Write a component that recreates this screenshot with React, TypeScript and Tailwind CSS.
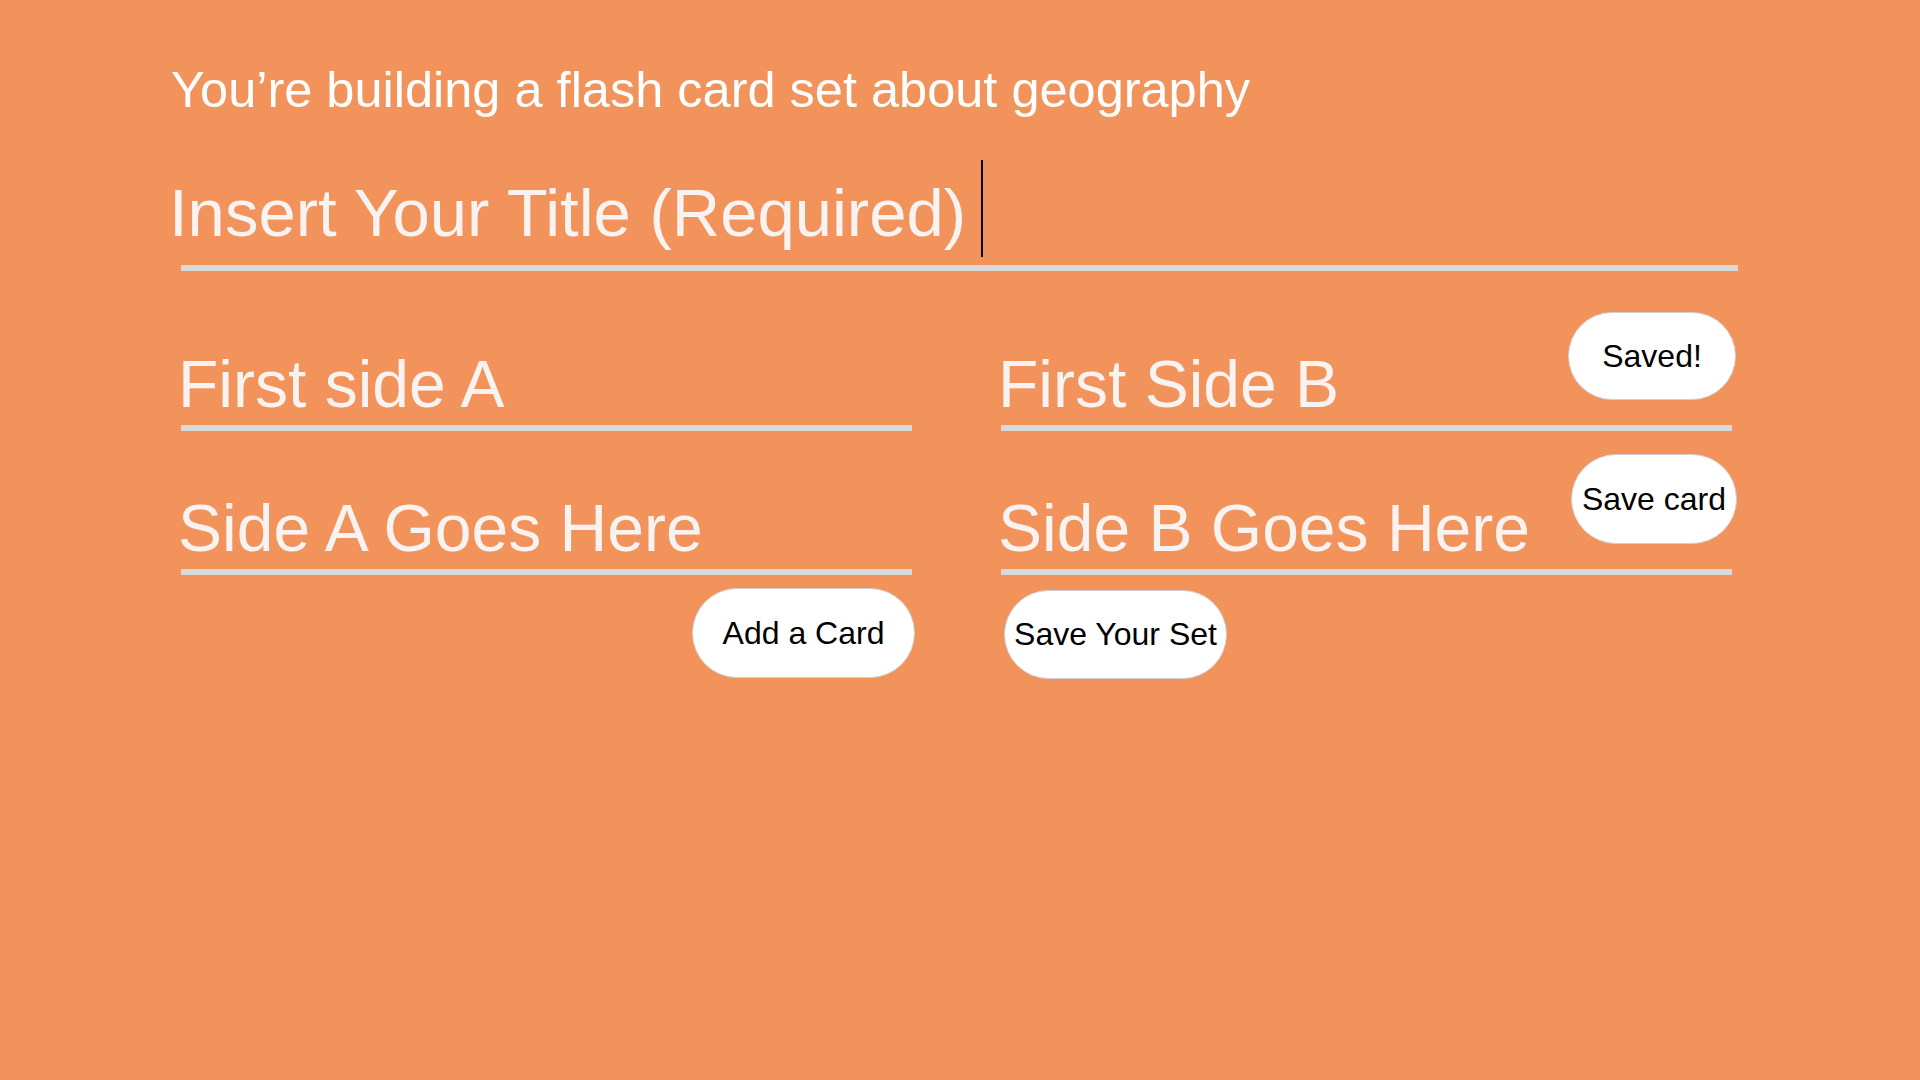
import React from "react";

function PillButton({ label, className = "" }: { label: string; className?: string }) {
  return (
    <button
      type="button"
      className={`flex items-center justify-center rounded-full bg-white border border-[#d0d0d0] text-black text-[32px] leading-none ${className}`}
    >
      {label}
    </button>
  );
}

function Field({ text, button }: { text: string; button?: React.ReactNode }) {
  return (
    <div className="flex flex-col w-[731px]">
      <div className="flex items-end justify-between">
        <div className="text-[66px] leading-none text-[#f8f2f0] -ml-[3px]">{text}</div>
        {button}
      </div>
      <div className="mt-[8px] h-[6px] bg-[#d9d9d9]" />
    </div>
  );
}

export default function App() {
  return (
    <div className="min-h-screen w-full bg-[#f2935c] font-['Liberation_Sans',Arial,sans-serif] pl-[172px] pt-[65px]">
      {/* heading */}
      <div className="text-[50.5px] leading-none text-white -ml-[1px]">You’re building a flash card set about geography</div>

      {/* title input */}
      <div className="mt-[44px] w-[1566px]">
        <div className="flex items-end">
          <div className="text-[67px] leading-none text-[#f8f2f0] mb-[11px] -ml-[3px]">Insert Your Title (Required)</div>
          <div className="ml-[15px] w-[2px] h-[97px] bg-black" />
        </div>
        <div className="mt-[8px] ml-[9px] h-[6px] w-[1557px] bg-[#d9d9d9]" />
      </div>

      {/* cards */}
      <div className="ml-[9px] mt-[41px] flex flex-col">
        <div className="flex items-end gap-[89px]">
          <Field text="First side A" />
          <Field text="First Side B" button={<PillButton label="Saved!" className="w-[168px] h-[88px] mb-[17px] -mr-[4px]" />} />
        </div>
        <div className="mt-[23px] flex items-end gap-[89px]">
          <Field text="Side A Goes Here" />
          <Field text="Side B Goes Here" button={<PillButton label="Save card" className="w-[166px] h-[90px] mb-[17px] -mr-[5px]" />} />
        </div>
        <div className="mt-[13px] flex items-start gap-[89px]">
          <div className="w-[731px] flex justify-end">
            <PillButton label="Add a Card" className="w-[223px] h-[90px] -mr-[3px]" />
          </div>
          <PillButton label="Save Your Set" className="w-[223px] h-[89px] mt-[2px] ml-[3px]" />
        </div>
      </div>
    </div>
  );
}
